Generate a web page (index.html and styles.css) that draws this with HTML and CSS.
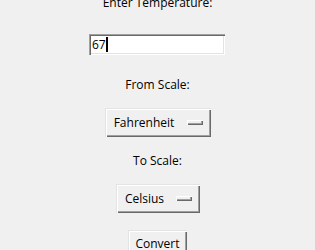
FILE: index.html
```html
<!DOCTYPE html>
<html lang="en">
<head>
    <meta charset="UTF-8">
    <meta name="viewport" content="width=device-width, initial-scale=1.0">
    <title>Temperature Converter</title>
    <link rel="stylesheet" href="styles.css">
</head>
<body>
    <main class="window">
        <label class="caption caption-first" for="temp">Enter Temperature:</label>
        <div class="entry-wrap">
            <input id="temp" class="entry" value="67">
            <span class="caret"></span>
        </div>

        <div class="caption caption-from">From Scale:</div>
        <button class="menu menu-from">
            <span>Fahrenheit</span>
            <span class="indicator"></span>
        </button>

        <div class="caption caption-to">To Scale:</div>
        <button class="menu menu-to">
            <span>Celsius</span>
            <span class="indicator"></span>
        </button>

        <button class="convert">Convert</button>
    </main>
</body>
</html>
```

FILE: styles.css
```css
html, body {
    margin: 0;
    height: 100%;
    overflow: hidden;
    background-color: #f0f0f0;
}
.window {
    display: flex;
    flex-direction: column;
    align-items: center;
    font-family: "Open Sans", "Noto Sans", sans-serif;
    font-size: 12px;
    line-height: 17px;
    color: #000;
}
.caption {
    display: block;
    height: 17px;
}
.caption-first {
    margin-top: -6px;
}
.entry-wrap {
    position: relative;
    margin-top: 23px;
    margin-left: -1px;
    height: 21px;
}
.entry {
    box-sizing: border-box;
    display: block;
    width: 136px;
    height: 21px;
    padding: 0 3px;
    border: none;
    background: #fff;
    box-shadow: inset 1px 1px 0 #a0a0a0, inset 2px 2px 0 #696969, inset -1px -1px 0 #fff, inset -2px -2px 0 #e3e3e3;
    font: inherit;
    color: #000;
    outline: none;
}
.caret {
    position: absolute;
    left: 17px;
    top: 3px;
    width: 2px;
    height: 15px;
    background: #000;
}
.caption-from {
    margin-top: 21px;
}
.menu {
    box-sizing: border-box;
    display: flex;
    align-items: center;
    margin-top: 15px;
    height: 29px;
    padding: 0 8px 0 9px;
    border: none;
    background: #f0f0f0;
    box-shadow: inset 1px 1px 0 #e3e3e3, inset 2px 2px 0 #fff, inset -1px -1px 0 #696969, inset -2px -2px 0 #a0a0a0;
    font: inherit;
    color: #000;
}
.menu-from {
    gap: 13px;
    margin-left: 1px;
}
.menu-to {
    gap: 12px;
    margin-top: 15px;
    margin-left: 1px;
}
.indicator {
    box-sizing: border-box;
    width: 16px;
    height: 5px;
    background: #f0f0f0;
    box-shadow: inset 1px 1px 0 #fff, inset -1px -1px 0 #696969, inset -2px -2px 0 #a0a0a0;
}
.caption-to {
    margin-top: 15px;
}
.convert {
    box-sizing: border-box;
    margin-top: 17px;
    height: 27px;
    padding: 0 7px;
    border: none;
    background: #f0f0f0;
    box-shadow: inset 1px 1px 0 #e3e3e3, inset 2px 2px 0 #fff, inset -1px -1px 0 #696969, inset -2px -2px 0 #a0a0a0;
    font: inherit;
    color: #000;
}
```
